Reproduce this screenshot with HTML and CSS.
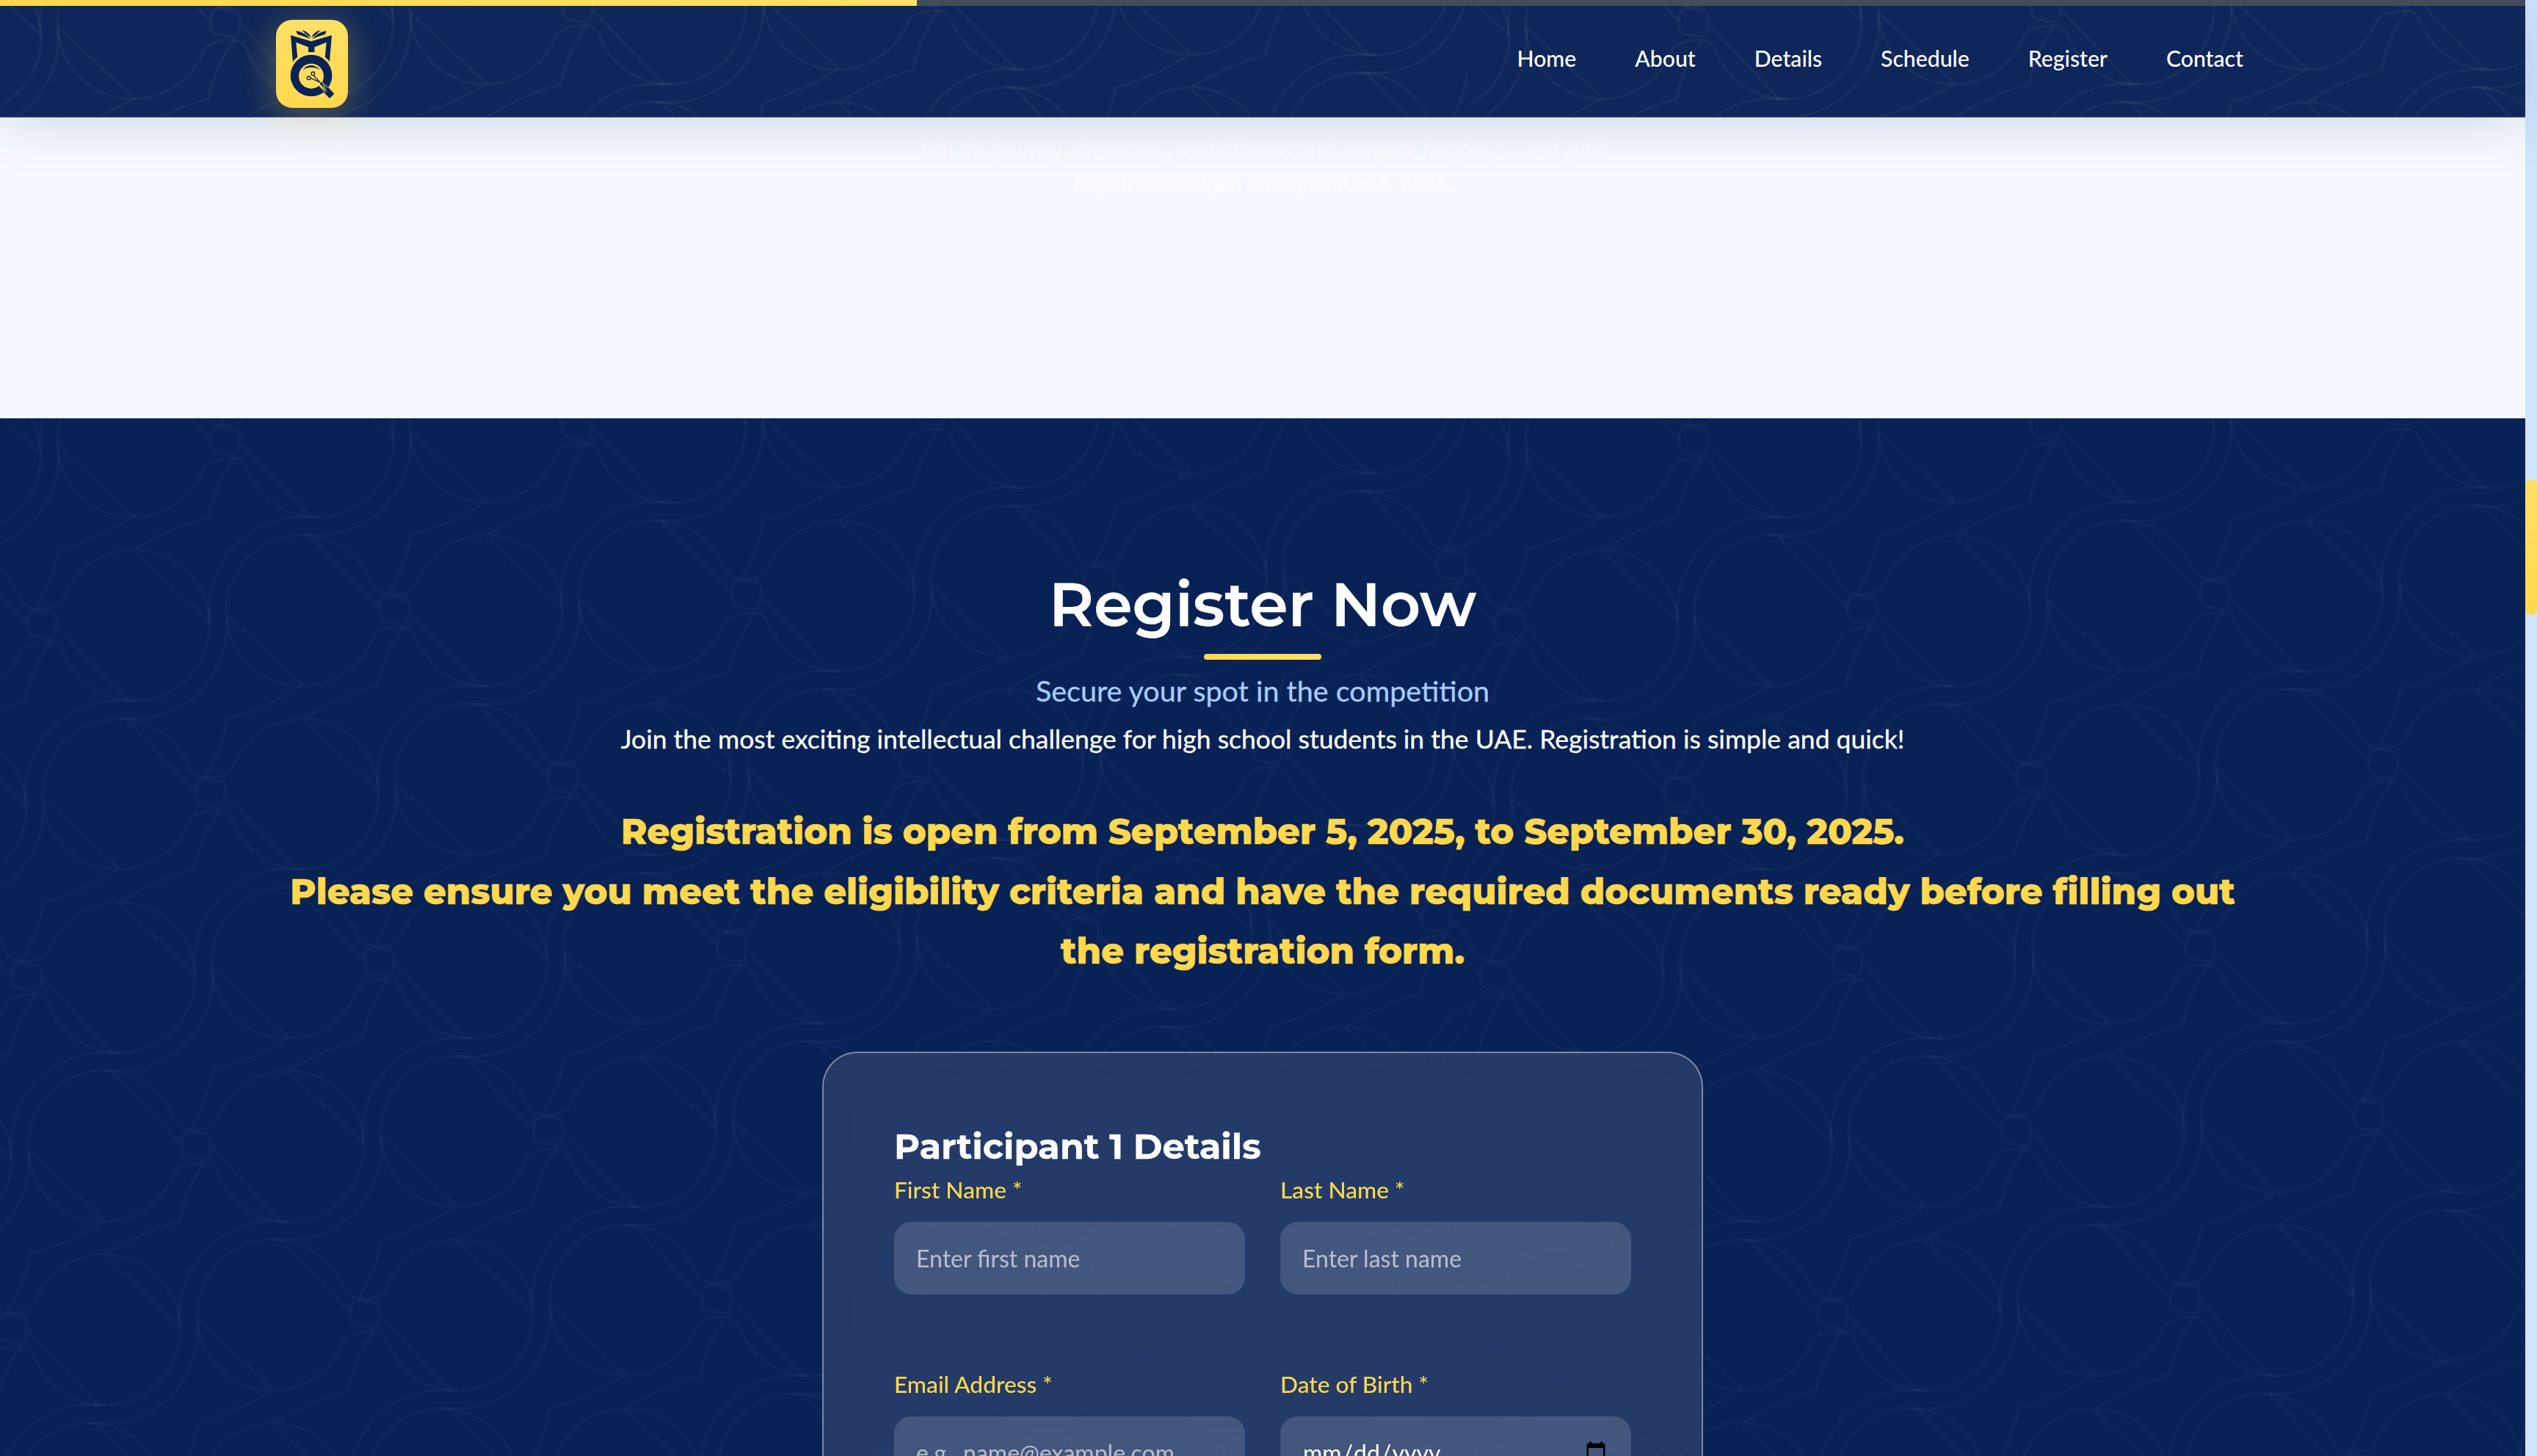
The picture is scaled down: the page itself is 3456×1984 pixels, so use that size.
FILE: index.html
```html
<!DOCTYPE html>
<html lang="en">
<head>
<meta charset="utf-8">
<title>Register Now</title>
<link rel="stylesheet" href="styles.css">
</head>
<body>
<svg class="defs" width="0" height="0" aria-hidden="true">
  <defs>
    <g id="motif">
      <path d="M-20,-3C-20,-14 -17,-20 -8,-21L12,-18C17,-18 20,-12 20,-8L19,7C19,12 15,17 10,18L-10,15C-17,14 -20,8 -20,3Z"/>
      <path d="M-8,-23C-18,-24 -26,-28 -30,-38A103,103 0 1 0 -30,38C-26,28 -15,24 12,22"/>
      <path d="M-8,-22C6,-22 26,-25 30,-38A103,103 0 1 1 30,38C27,29 20,24 12,22"/>
      <path d="M-115,-102L-20,-3M-228,5L-123,103M125,-102L230,-3M22,3L117,103"/>
      <path d="M-8,-23Q15,-60 23,-103Q70,-115 122,-146M12,22Q-15,60 -23,103Q-70,115 -122,146"/>
      <path d="M-252,13A128,128 0 0 1 -140,-127Q-125,-128 -103,-127M252,-13A128,128 0 0 1 140,127Q125,128 103,127"/>
    </g>
    <pattern id="lattice" patternUnits="userSpaceOnUse" width="325.27" height="353.55" patternTransform="translate(537 262) rotate(45)">
      <g transform="rotate(-45)" class="lattice-lines">
        <use href="#motif"/>
        <use href="#motif" x="230" y="230"/>
        <use href="#motif" x="250" y="-250"/>
        <use href="#motif" x="480" y="-20"/>
        <use href="#motif" x="-250" y="250"/>
        <use href="#motif" x="-20" y="480"/>
        <use href="#motif" x="-230" y="-230"/>
        <use href="#motif" x="-480" y="20"/>
        <use href="#motif" x="-270" y="730"/>
        <use href="#motif" x="-500" y="500"/>
        <use href="#motif" x="210" y="710"/>
        <use href="#motif" x="460" y="460"/>
      </g>
    </pattern>
    <pattern id="lattice-tile" patternUnits="userSpaceOnUse" width="2000" height="2000">
      <rect width="2000" height="2000" fill="url(#lattice)"/>
    </pattern>
  </defs>
</svg>

<div class="page">
  <header class="site-header">
    <svg class="lattice-bg"><rect width="100%" height="100%" fill="url(#lattice-tile)"/></svg>
    <div class="progress"><div class="progress-fill" style="width:36.3%"></div></div>
    <a class="logo" href="#">
      <svg viewBox="228 84 294 360" width="98" height="120">
        <g class="logo-navy">
          <path d="M288,147L372,172L456,147L446,262L428,240L434,176L385,196L385,216L360,216L360,196L310,176L316,240L297,262Z"/>
          <path d="M310,129Q345,134 369,163Q340,150 315,143Z"/>
          <path d="M334,126Q362,134 371,156Q352,146 343,136Z"/>
          <path d="M434,129Q399,134 375,163Q404,150 429,143Z"/>
          <path d="M410,126Q382,134 373,156Q392,146 401,136Z"/>
        </g>
        <circle class="logo-yellow" cx="372" cy="312" r="94"/>
        <circle class="logo-navy" cx="372" cy="312" r="85"/>
        <path class="logo-navy" d="M418,375L447,405L466,386L437,356Z"/>
        <circle class="logo-yellow" cx="372" cy="314" r="51"/>
        <path class="logo-yellow" d="M395,345L430,382L446,362L410,325Z"/>
        <path class="logo-arc" d="M337,289Q368,252 408,288Q370,268 337,289Z"/>
        <g class="logo-line">
          <circle cx="362" cy="322" r="7"/>
          <circle cx="379" cy="304" r="7"/>
          <path d="M369,322L410,340M381,311L418,350"/>
        </g>
        <path class="logo-navy" d="M408,347L424,329L445,366L432,382Z"/>
        <path class="logo-thread" d="M417,337L430,372M426,346L438,362M412,352L436,376"/>
      </svg>
    </a>
    <nav class="nav">
      <a href="#">Home</a>
      <a href="#">About</a>
      <a href="#">Details</a>
      <a href="#">Schedule</a>
      <a href="#">Register</a>
      <a href="#">Contact</a>
    </nav>
  </header>

  <section class="hero">
    <p>Join the journey, showcase your brilliance, and compete for glory — and gold!</p>
    <p>Registrations open on September 5, 2025.</p>
  </section>

  <section class="register">
    <svg class="lattice-bg"><rect width="100%" height="100%" fill="url(#lattice-tile)"/></svg>
    <div class="register-inner">
      <h2 class="title">Register Now</h2>
      <div class="rule"></div>
      <p class="subtitle">Secure your spot in the competition</p>
      <p class="intro">Join the most exciting intellectual challenge for high school students in the UAE. Registration is simple and quick!</p>
      <p class="notice">Registration is open from September 5, 2025, to September 30, 2025.<br>Please ensure you meet the eligibility criteria and have the required documents ready before filling out the registration form.</p>
      <form class="card">
        <h3 class="card-title">Participant 1 Details</h3>
        <div class="field-grid">
          <label class="field"><span class="label">First Name *</span><input type="text" placeholder="Enter first name"></label>
          <label class="field"><span class="label">Last Name *</span><input type="text" placeholder="Enter last name"></label>
          <label class="field"><span class="label">Email Address *</span><input type="email" placeholder="e.g., name@example.com"></label>
          <label class="field"><span class="label">Date of Birth *</span><input type="date"></label>
        </div>
      </form>
    </div>
  </section>
</div>

<aside class="scrollbar"><div class="thumb"></div></aside>
</body>
</html>
```

FILE: styles.css
```css
* { box-sizing: border-box; }
html, body { margin: 0; height: 1984px; overflow: hidden; }
body {
  display: flex;
  font-family: "Lato", "Liberation Sans", sans-serif;
  background: #f5f9ff;
  color: #fff;
}
.defs { position: absolute; }
.lattice-lines { fill: none; stroke: #ffffff; stroke-opacity: .045; stroke-width: 3; }
.lattice-bg { position: absolute; inset: 0; width: 100%; height: 100%; pointer-events: none; }
.register .lattice-bg { opacity: .6; }

.page { flex: 1; min-width: 0; height: 1984px; display: flex; flex-direction: column; }

.site-header {
  position: relative;
  z-index: 2;
  height: 160px;
  flex: none;
  display: flex;
  align-items: center;
  justify-content: space-between;
  padding: 28px 376px 12px;
  background: #0e2659;
  border-bottom: 2px solid #1c3366;
  box-shadow: 0 10px 70px rgba(10, 35, 87, .14);
}
.progress { position: absolute; left: 0; right: 0; top: 0; height: 8px; background: #434d59; }
.progress-fill { height: 100%; background: linear-gradient(90deg, #ffd84d, #ffe26a); }
.logo {
  position: relative;
  display: block;
  width: 98px;
  height: 120px;
  border-radius: 22px;
  background: linear-gradient(180deg, #ffe066, #ffd84d);
  box-shadow: 0 8px 50px rgba(255, 216, 77, .34);
}
.logo svg { display: block; }
.logo-navy { fill: #0a2357; }
.logo-yellow { fill: #ffdc59; }
.logo-arc { fill: #0a2357; }
.logo-line { fill: none; stroke: #0a2357; stroke-width: 4; }
.logo-thread { fill: none; stroke: #ffdc59; stroke-width: 3; }
.nav { position: relative; display: flex; gap: 64px; margin-bottom: 16px; }
.nav a { padding: 0 8px; color: #fff; text-decoration: none; font-size: 30.2px; font-weight: 500; line-height: 40px; }

.hero {
  height: 410px;
  flex: none;
  padding-top: 23px;
  background: #f5f9ff;
  text-align: center;
}
.hero p { margin: 0; font-size: 28px; line-height: 45px; color: #fff; opacity: .7; }

.register {
  position: relative;
  flex: 1;
  min-height: 0;
  overflow: hidden;
  background: #092256;
}
.register-inner { position: relative; display: flex; flex-direction: column; align-items: center; padding-top: 198px; }
.title {
  margin: 0;
  font-family: "Montserrat", "Inter", sans-serif;
  font-size: 84px;
  font-weight: 600;
  line-height: 110px;
  color: #fff;
  -webkit-text-stroke: .4px #fff;
}
.rule { width: 160px; height: 8px; margin-top: 13px; border-radius: 4px; background: linear-gradient(90deg, #ffd84d, #ffe26a); }
.subtitle { margin: 18px 0 0; font-size: 39.5px; line-height: 48px; color: #a9ccff; -webkit-text-stroke: .3px #a9ccff; }
.intro { margin: 18px 0 0; font-size: 35.5px; line-height: 48px; color: #fff; -webkit-text-stroke: .3px #fff; }
.notice {
  margin: 62px 0 0;
  width: 2720px;
  font-family: "Montserrat", "Inter", sans-serif;
  font-size: 48px;
  font-weight: 800;
  line-height: 81.6px;
  text-align: center;
  color: #ffd84d;
  -webkit-text-stroke: .6px #ffd84d;
}
.card {
  width: 1200px;
  margin-top: 95px;
  padding: 95px 96px 200px;
  border: 2px solid rgba(255, 255, 255, .4);
  border-radius: 48px;
  background: rgba(255, 255, 255, .11);
  backdrop-filter: blur(20px);
}
.card-title {
  margin: 0;
  font-family: "Montserrat", "Inter", sans-serif;
  font-size: 48px;
  font-weight: 700;
  line-height: 64px;
  color: #fff;
  -webkit-text-stroke: .4px #fff;
}
.field-grid { display: grid; grid-template-columns: 1fr 1fr; column-gap: 48px; row-gap: 102px; margin-top: 7px; }
.field { display: flex; flex-direction: column; }
.label { font-size: 31.7px; font-weight: 500; line-height: 40px; color: #ffd84d; }
.field input {
  height: 99px;
  margin-top: 24px;
  padding: 0 30px;
  border: 0;
  border-radius: 24px;
  background: rgba(255, 255, 255, .15);
  color: #fff;
  font-family: inherit;
  font-size: 32px;
  outline: none;
}
.field input::placeholder { color: rgba(255, 255, 255, .62); }

.scrollbar { width: 16px; flex: none; background: #d0e4fb; }
.thumb { width: 16px; height: 185px; margin-top: 653px; border-radius: 8px; background: linear-gradient(180deg, #ffe066, #ffd84d); }
```
